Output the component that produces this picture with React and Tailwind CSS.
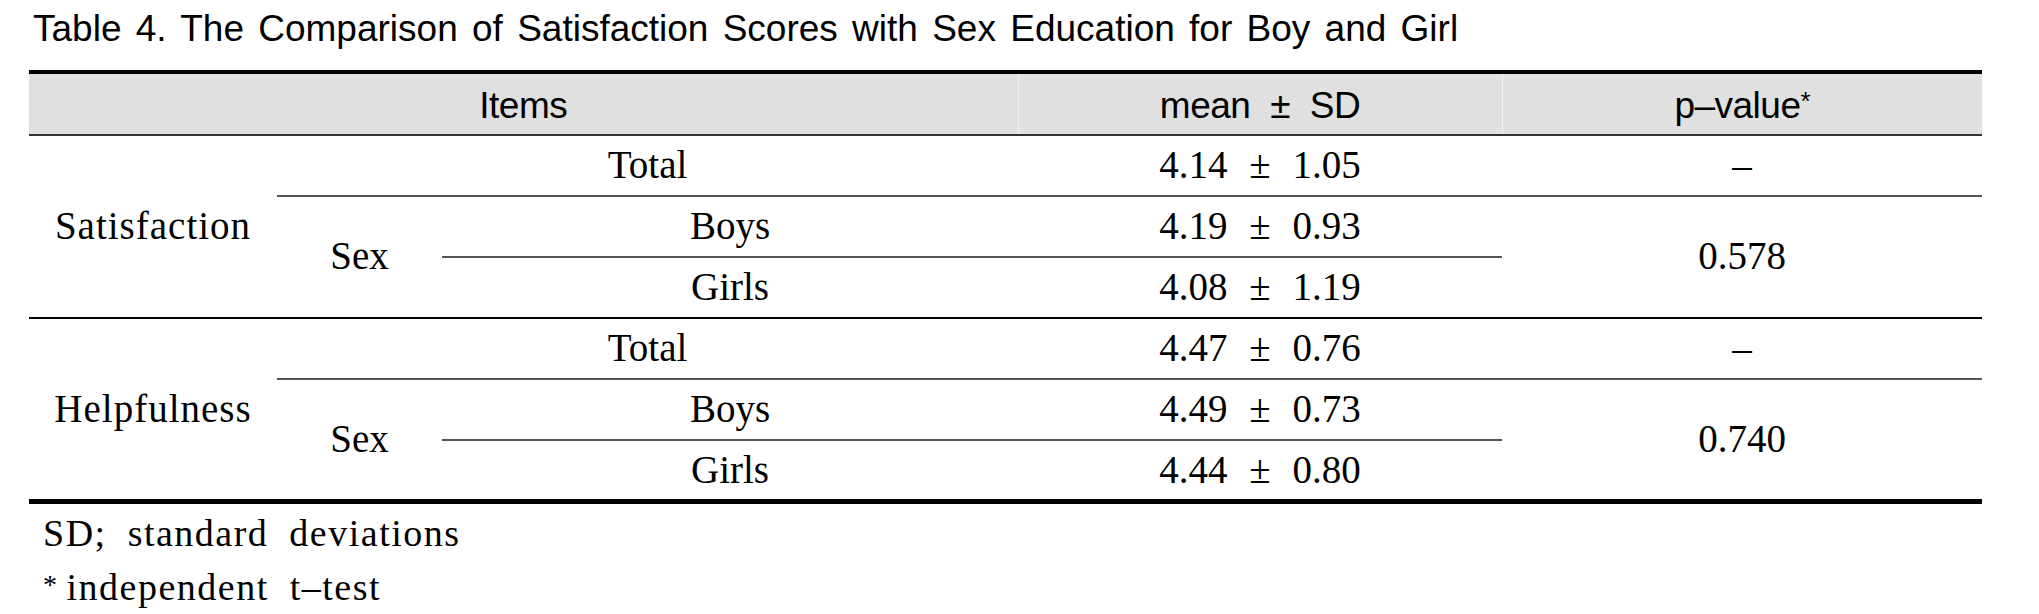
const serif = "font-['Liberation_Serif','Times_New_Roman',serif]"

const Cell = ({ children, className = '', ...rest }) => (
    <td {...rest} className={`text-center align-middle p-0 ${className}`}>{children}</td>
)

const Num = ({ children }) => <span className="[word-spacing:12px]">{children}</span>

const rows = [
    ['Satisfaction', '4.14 ± 1.05', '4.19 ± 0.93', '4.08 ± 1.19', '0.578', false],
    ['Helpfulness', '4.47 ± 0.76', '4.49 ± 0.73', '4.44 ± 0.80', '0.740', true],
]

const App = () => {
    return (
        <div className="w-[2039px] h-[614px] bg-white text-black overflow-hidden">
            <h1 className="pl-[33px] pt-[6px] h-[70px] font-['Liberation_Sans',Arial,sans-serif] text-[37px] leading-[46px] [word-spacing:4px]">
                Table 4. The Comparison of Satisfaction Scores with Sex Education for Boy and Girl
            </h1>
            <table className={`ml-[29px] w-[1953px] table-fixed border-collapse text-[39px] ${serif}`}>
                <colgroup>
                    <col className="w-[248px]" />
                    <col className="w-[165px]" />
                    <col className="w-[576px]" />
                    <col className="w-[484px]" />
                    <col className="w-[480px]" />
                </colgroup>
                <thead>
                    <tr className="bg-[#e0e0e0] border-t-[4px] border-t-black border-b-[2px] border-b-[#333] h-[61px] font-['Liberation_Sans',Arial,sans-serif] text-[37px] tracking-[-0.5px]">
                        <th colSpan={3} className="font-normal pt-[4px] border-r border-r-[#f0f0f0]">Items</th>
                        <th className="font-normal pt-[4px] border-r border-r-[#f0f0f0] [word-spacing:10px]">mean ± SD</th>
                        <th className="font-normal pt-[4px]">p–value<sup className="text-[26px] relative -top-[8px]">*</sup></th>
                    </tr>
                </thead>
                <tbody>
                    {rows.map(([label, total, boys, girls, p, last]) => {
                        const endLine = last ? 'border-b-[5px] border-b-black' : 'border-b-[2px] border-b-black'
                        return [
                            <tr key={label + '1'} className="h-[61px]">
                                <Cell rowSpan={3} className={`${endLine} tracking-[1px]`}>{label}</Cell>
                                <Cell colSpan={2} className="border-b-[2px] border-b-[#555]">Total</Cell>
                                <Cell className="border-b-[2px] border-b-[#555]"><Num>{total}</Num></Cell>
                                <Cell className="border-b-[2px] border-b-[#555]">–</Cell>
                            </tr>,
                            <tr key={label + '2'} className="h-[61px]">
                                <Cell rowSpan={2} className={endLine}>Sex</Cell>
                                <Cell className="border-b-[2px] border-b-[#555]">Boys</Cell>
                                <Cell className="border-b-[2px] border-b-[#555]"><Num>{boys}</Num></Cell>
                                <Cell rowSpan={2} className={endLine}>{p}</Cell>
                            </tr>,
                            <tr key={label + '3'} className="h-[61px]">
                                <Cell className={endLine}>Girls</Cell>
                                <Cell className={endLine}><Num>{girls}</Num></Cell>
                            </tr>,
                        ]
                    })}
                </tbody>
            </table>
            <div className={`pl-[43px] pt-[2px] text-[38px] leading-[54px] tracking-[1.5px] [word-spacing:10px] ${serif}`}>
                <p>SD; standard deviations</p>
                <p><sup className="text-[28px] relative -top-[6px] mr-[8px]">*</sup>independent t–test</p>
            </div>
        </div>
    )
}

export default App
